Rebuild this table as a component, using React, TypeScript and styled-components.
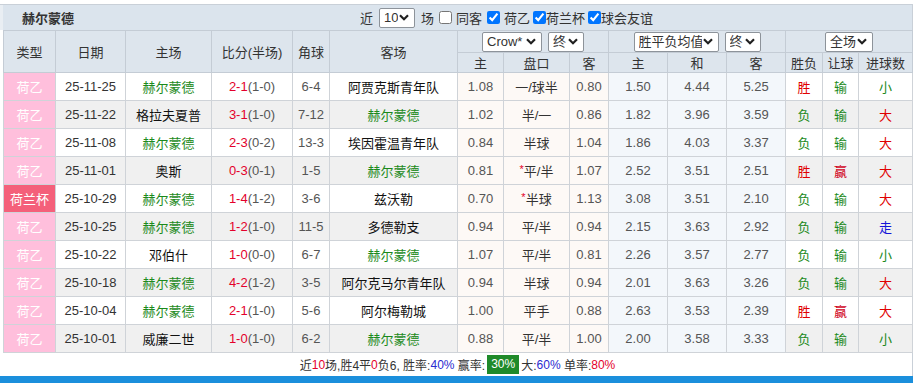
import React from "react";
import { styled, createGlobalStyle } from "styled-components";

const GlobalStyle = createGlobalStyle`
  html, body {
    margin: 0;
    padding: 0;
    background: #fff;
  }
  body {
    font-family: "Liberation Sans", "Noto Sans CJK SC", sans-serif;
    font-size: 12px;
    color: #333;
  }
`;

const chevron =
  "data:image/svg+xml;utf8," +
  encodeURIComponent(
    '<svg xmlns="http://www.w3.org/2000/svg" width="10" height="7" viewBox="0 0 10 7"><path d="M1 1.2 5 5.2 9 1.2" fill="none" stroke="#222" stroke-width="2.2"/></svg>'
  );

const Root = styled.div`
  width: 913px;
  height: 383px;
  box-sizing: border-box;
  padding-top: 4px;
  display: flex;
  flex-direction: column;
  overflow: hidden;
`;

const Panel = styled.div`
  flex: none;
  border-top: 1px solid #c9d0d8;
  border-right: 1px solid #c9d0d8;
  background: #fff;
`;

const TitleBar = styled.div`
  height: 25px;
  display: flex;
  align-items: center;
  background: #dbe4ed;
  border-left: 3px solid #e9eef3;
`;

const TeamTitle = styled.h3`
  margin: 0;
  width: 357px;
  padding-left: 19px;
  box-sizing: border-box;
  font-size: 13px;
  font-weight: bold;
  color: #333;
`;

const Filters = styled.div`
  display: flex;
  align-items: center;
  gap: 3px;
  font-size: 13px;
  color: #333;
  & input[type="checkbox"] {
    width: 13px;
    height: 13px;
    margin: 0;
  }
`;

const Label = styled.label<{ $gap?: boolean }>`
  display: inline-flex;
  align-items: center;
  gap: ${(p) => (p.$gap ? "4px" : "0")};
  margin-left: ${(p) => (p.$gap ? "2px" : "0")};
`;

const Select = styled.select<{ $w: number }>`
  appearance: none;
  -webkit-appearance: none;
  width: ${(p) => p.$w}px;
  height: 20px;
  box-sizing: border-box;
  font-family: "Liberation Sans", "Noto Sans CJK SC", sans-serif;
  font-size: 13px;
  color: #333;
  padding: 0 16px 0 4px;
  border: 1px solid #8d939a;
  border-radius: 2px;
  background: #fff url("${chevron}") no-repeat right 5px center;
  margin: 0 3px;
  vertical-align: middle;
`;

const Table = styled.table`
  width: 909px;
  margin-left: 3px;
  border-collapse: collapse;
  table-layout: fixed;
  text-align: center;
`;

const Th = styled.th<{ $h?: number }>`
  background: #dde5ed;
  border: 1px solid #c4ccd5;
  font-weight: normal;
  font-size: 13px;
  color: #333;
  padding: 0;
  height: ${(p) => p.$h ?? 19}px;
`;

type Tone = "plain" | "asian" | "euro";

const Td = styled.td<{ $tone?: Tone; $alt?: boolean; $color?: string }>`
  border: 1px solid #cfd3d8;
  padding: 0;
  height: 27px;
  font-size: 13px;
  color: ${(p) => p.$color ?? "#333"};
  background: ${(p) =>
    p.$tone === "asian" ? "#fdf9f6" : p.$tone === "euro" ? "#f3f7fb" : p.$alt ? "#f0f0f0" : "#fff"};
`;

const League = styled.td<{ $cup?: boolean }>`
  border: 1px solid #cfd3d8;
  padding: 0;
  height: 27px;
  font-size: 13px;
  color: #fff;
  background: ${(p) => (p.$cup ? "#f4607a" : "#ffbfdc")};
`;

const Odd = styled.span`
  color: #555;
`;

const Score = styled.span`
  color: #e4002b;
`;

const Half = styled.span`
  color: #555;
`;

const Star = styled.span`
  color: #e4002b;
  font-size: 11px;
  vertical-align: 3px;
`;

const Footer = styled.div`
  height: 23px;
  display: flex;
  align-items: center;
  justify-content: center;
  font-size: 12px;
  color: #333;
  border-left: 3px solid #fff;
  white-space: pre;
`;

const Red = styled.span`
  color: #e4002b;
`;

const Blue = styled.span`
  color: #2a2ad0;
`;

const Badge = styled.span`
  display: inline-block;
  background: #1f8a2a;
  color: #fff;
  padding: 2px 4px;
  margin: 0 2px;
  line-height: 15px;
`;

const BlueBar = styled.div`
  flex: 1 0 4px;
  background: #1b8fdc;
`;

const GREEN = "#1b8a1b";
const RED = "#e00000";
const TEAM = "赫尔蒙德";

type Row = [string, string, string, string, string, string, string, string, string, string, string, string, string, string, string];

const rows: Row[] = [
  ["荷乙", "25-11-25", TEAM, "2-1(1-0)", "6-4", "阿贾克斯青年队", "1.08", "一/球半", "0.80", "1.50", "4.44", "5.25", "胜", "输", "小"],
  ["荷乙", "25-11-22", "格拉夫夏普", "3-1(1-0)", "7-12", TEAM, "1.02", "半/一", "0.86", "1.82", "3.96", "3.59", "负", "输", "大"],
  ["荷乙", "25-11-08", TEAM, "2-3(0-2)", "13-3", "埃因霍温青年队", "0.84", "半球", "1.04", "1.86", "4.03", "3.37", "负", "输", "大"],
  ["荷乙", "25-11-01", "奥斯", "0-3(0-1)", "1-5", TEAM, "0.81", "*平/半", "1.07", "2.52", "3.51", "2.51", "胜", "赢", "大"],
  ["荷兰杯", "25-10-29", TEAM, "1-4(1-2)", "3-6", "兹沃勒", "0.70", "*半球", "1.13", "3.08", "3.51", "2.10", "负", "输", "大"],
  ["荷乙", "25-10-25", TEAM, "1-2(1-0)", "11-5", "多德勒支", "0.94", "平/半", "0.94", "2.15", "3.63", "2.92", "负", "输", "走"],
  ["荷乙", "25-10-22", "邓伯什", "1-0(0-0)", "6-7", TEAM, "1.07", "平/半", "0.81", "2.26", "3.57", "2.77", "负", "输", "小"],
  ["荷乙", "25-10-18", TEAM, "4-2(1-2)", "3-5", "阿尔克马尔青年队", "0.94", "半球", "0.94", "2.01", "3.63", "3.26", "负", "输", "大"],
  ["荷乙", "25-10-04", TEAM, "2-1(1-0)", "5-6", "阿尔梅勒城", "1.00", "平手", "0.88", "2.63", "3.53", "2.39", "胜", "赢", "大"],
  ["荷乙", "25-10-01", "威廉二世", "1-0(1-0)", "6-2", TEAM, "0.88", "平/半", "1.00", "2.00", "3.58", "3.33", "负", "输", "小"],
];

const widths = [52, 70, 86, 81, 37, 128, 46, 66, 39, 59, 59, 59, 37, 36, 54];

const resultColor = (v: string) => {
  if (v === "胜" || v === "大") return RED;
  if (v === "赢") return "#d0021b";
  if (v === "走") return "#1414d8";
  return GREEN;
};

function ScoreCell({ value }: { value: string }) {
  const i = value.indexOf("(");
  return (
    <>
      <Score>{value.slice(0, i)}</Score>
      <Half>{value.slice(i)}</Half>
    </>
  );
}

function Handicap({ value }: { value: string }) {
  if (!value.startsWith("*")) return <>{value}</>;
  return (
    <>
      <Star>*</Star>
      {value.slice(1)}
    </>
  );
}

export default function App() {
  return (
    <Root>
      <GlobalStyle />
      <Panel>
        <TitleBar>
          <TeamTitle>{TEAM}</TeamTitle>
          <Filters>
            <span>近</span>
            <Select $w={36} defaultValue="10">
              <option>10</option>
              <option>20</option>
            </Select>
            <span>场</span>
            <Label $gap>
              <input type="checkbox" />
              同客
            </Label>
            <Label $gap>
              <input type="checkbox" defaultChecked />
              荷乙
            </Label>
            <Label>
              <input type="checkbox" defaultChecked />
              荷兰杯
            </Label>
            <Label>
              <input type="checkbox" defaultChecked />
              球会友谊
            </Label>
          </Filters>
        </TitleBar>
        <Table>
          <colgroup>
            {widths.map((w, i) => (
              <col key={i} style={{ width: w }} />
            ))}
          </colgroup>
          <thead>
            <tr>
              <Th rowSpan={2}>类型</Th>
              <Th rowSpan={2}>日期</Th>
              <Th rowSpan={2}>主场</Th>
              <Th rowSpan={2}>比分(半场)</Th>
              <Th rowSpan={2}>角球</Th>
              <Th rowSpan={2}>客场</Th>
              <Th colSpan={3} $h={21}>
                <Select $w={60} defaultValue="Crow*">
                  <option>Crow*</option>
                </Select>
                <Select $w={36} defaultValue="终">
                  <option>终</option>
                  <option>初</option>
                </Select>
              </Th>
              <Th colSpan={3} $h={21}>
                <Select $w={85} defaultValue="胜平负均值">
                  <option>胜平负均值</option>
                </Select>
                <Select $w={36} defaultValue="终">
                  <option>终</option>
                  <option>初</option>
                </Select>
              </Th>
              <Th colSpan={3} $h={21}>
                <Select $w={48} defaultValue="全场">
                  <option>全场</option>
                  <option>半场</option>
                </Select>
              </Th>
            </tr>
            <tr>
              <Th>主</Th>
              <Th>盘口</Th>
              <Th>客</Th>
              <Th>主</Th>
              <Th>和</Th>
              <Th>客</Th>
              <Th>胜负</Th>
              <Th>让球</Th>
              <Th>进球数</Th>
            </tr>
          </thead>
          <tbody>
            {rows.map((r, idx) => {
              const alt = idx % 2 === 1;
              return (
                <tr key={r[1]}>
                  <League $cup={r[0] === "荷兰杯"}>{r[0]}</League>
                  <Td $alt={alt}>{r[1]}</Td>
                  <Td $alt={alt} $color={r[2] === TEAM ? GREEN : "#111"}>{r[2]}</Td>
                  <Td $alt={alt}>
                    <ScoreCell value={r[3]} />
                  </Td>
                  <Td $alt={alt} $color="#555">{r[4]}</Td>
                  <Td $alt={alt} $color={r[5] === TEAM ? GREEN : "#111"}>{r[5]}</Td>
                  <Td $tone="asian"><Odd>{r[6]}</Odd></Td>
                  <Td $tone="asian">
                    <Handicap value={r[7]} />
                  </Td>
                  <Td $tone="asian"><Odd>{r[8]}</Odd></Td>
                  <Td $tone="euro"><Odd>{r[9]}</Odd></Td>
                  <Td $tone="euro"><Odd>{r[10]}</Odd></Td>
                  <Td $tone="euro"><Odd>{r[11]}</Odd></Td>
                  <Td $alt={alt} $color={resultColor(r[12])}>{r[12]}</Td>
                  <Td $alt={alt} $color={resultColor(r[13])}>{r[13]}</Td>
                  <Td $alt={alt} $color={resultColor(r[14])}>{r[14]}</Td>
                </tr>
              );
            })}
          </tbody>
        </Table>
        <Footer>
          近<Red>10</Red>场,胜4平<Red>0</Red>负6, 胜率:<Blue>40%</Blue> 赢率:
          <Badge>30%</Badge>大:<Blue>60%</Blue> 单率:<Red>80%</Red>
        </Footer>
      </Panel>
      <BlueBar />
    </Root>
  );
}
